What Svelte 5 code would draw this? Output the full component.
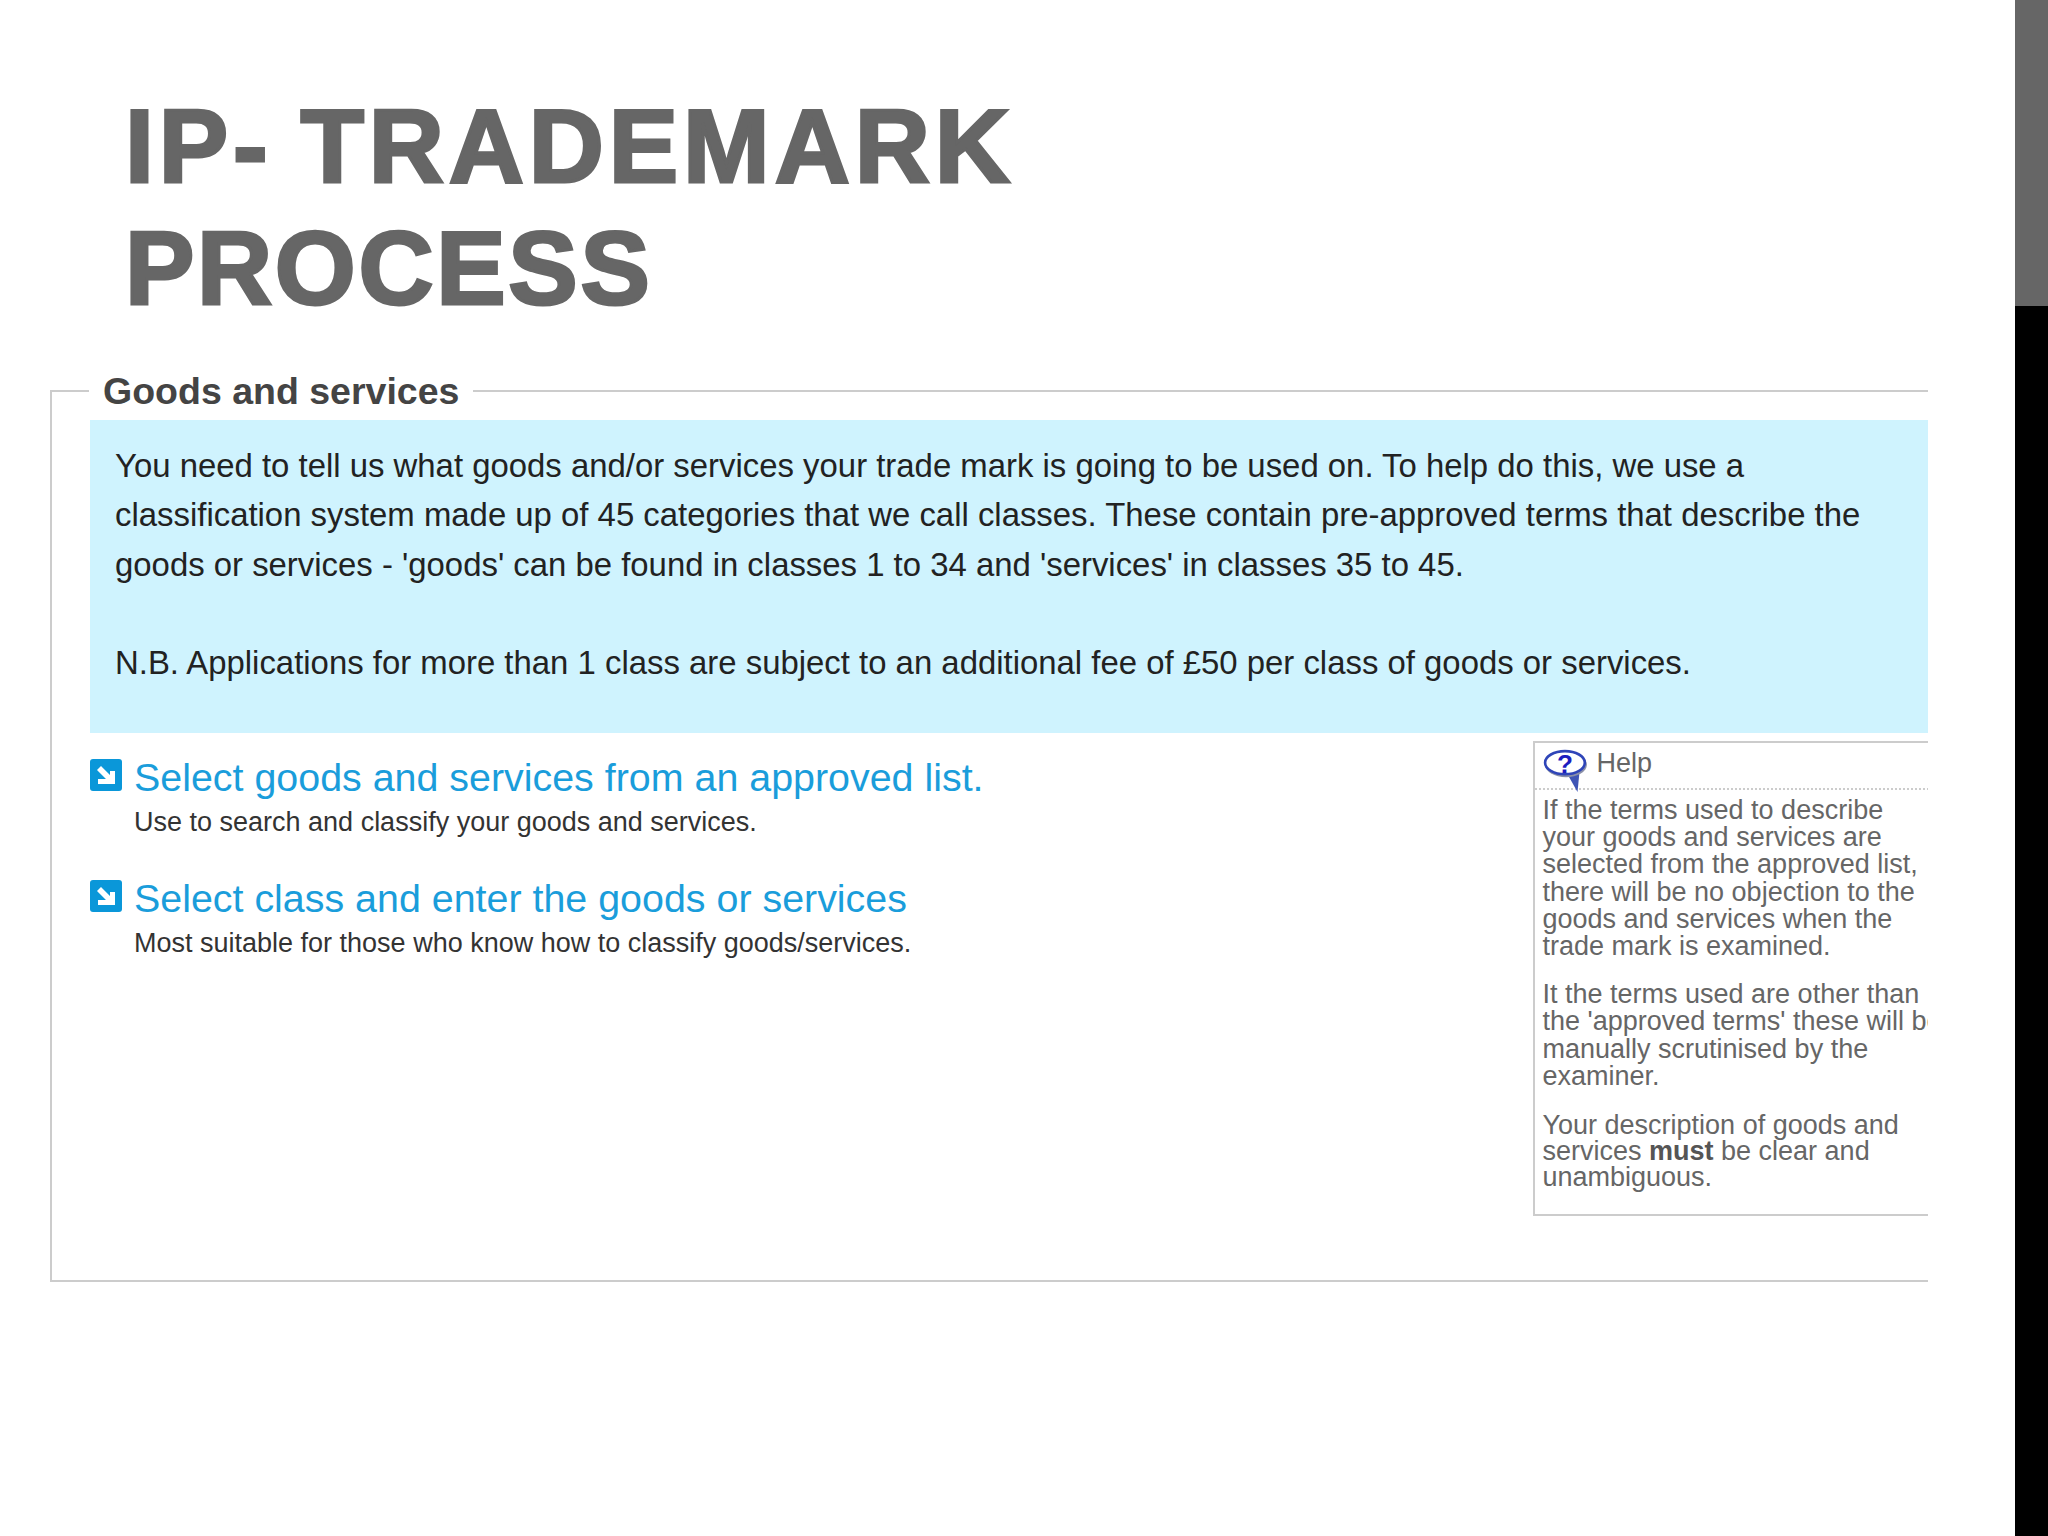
<script>
  // Slide content: body copy is split by line so the breaks stay as on the slide
  const intro = [
    'You need to tell us what goods and/or services your trade mark is going to be used on. To help do this, we use a',
    'classification system made up of 45 categories that we call classes. These contain pre-approved terms that describe the',
    "goods or services - 'goods' can be found in classes 1 to 34 and 'services' in classes 35 to 45."
  ];

  const options = [
    { title: 'Select goods and services from an approved list.', sub: 'Use to search and classify your goods and services.' },
    { title: 'Select class and enter the goods or services', sub: 'Most suitable for those who know how to classify goods/services.' }
  ];

  const helpTop = [
    'If the terms used to describe',
    'your goods and services are',
    'selected from the approved list,',
    'there will be no objection to the',
    'goods and services when the',
    'trade mark is examined.'
  ];

  const helpMiddle = [
    'It the terms used are other than',
    "the 'approved terms' these will be",
    'manually scrutinised by the',
    'examiner.'
  ];
</script>

<div class="slide">
  <main class="content">
    <h1><span class="first">IP- TRADEMARK</span><span class="second">PROCESS</span></h1>

    <fieldset class="panel">
      <legend>Goods and services</legend>

      <div class="intro">
        {#each intro as line}
          <p>{line}</p>
        {/each}
        <p class="note">N.B. Applications for more than 1 class are subject to an additional fee of £50 per class of goods or services.</p>
      </div>

      <div class="lower">
        <div class="options">
          {#each options as option}
            <div class="option">
              <svg class="arrow" viewBox="0 0 32 32" aria-hidden="true">
                <rect width="32" height="32" rx="3" fill="#0a97d9" />
                <path d="M7 11l4-4 9 9v-4h5v13H8v-5h8z" fill="#fff" />
              </svg>
              <div>
                <a href="#top">{option.title}</a>
                <p>{option.sub}</p>
              </div>
            </div>
          {/each}
        </div>

        <aside class="help">
          <div class="help-head">
            <svg class="bubble" viewBox="0 0 44 44" aria-hidden="true">
              <path d="M24 26l9 16 2-20z" fill="#3f55b5" />
              <ellipse cx="22" cy="16" rx="20" ry="12" fill="#8a90a8" />
              <ellipse cx="21" cy="14" rx="19" ry="11" fill="#fff" stroke="#2f45b8" stroke-width="2.5" />
              <text x="21" y="24" class="mark">?</text>
            </svg>
            <span>Help</span>
          </div>
          <div class="help-body">
            <p>{#each helpTop as line}{line}<br />{/each}</p>
            <p class="middle">{#each helpMiddle as line}{line}<br />{/each}</p>
            <p class="tight">Your description of goods and<br />services <b>must</b> be clear and<br />unambiguous.</p>
          </div>
        </aside>
      </div>
    </fieldset>
  </main>

  <div class="sidebar">
    <div class="sidebar-top"></div>
    <div class="sidebar-rest"></div>
  </div>
</div>

<style>
  :global(body) {
    margin: 0;
    background: #fff;
  }

  .slide {
    display: flex;
    width: 2048px;
    height: 1536px;
    overflow: hidden;
    font-family: "Liberation Sans", Arial, sans-serif;
  }

  .content {
    width: 2015px;
    padding-top: 85px;
    box-sizing: border-box;
  }

  /* Title */
  h1 {
    margin: 0 0 0 125px;
    font-size: 104px;
    line-height: 122px;
    font-weight: 700;
    color: #666;
    -webkit-text-stroke: 3px #666;
  }
  h1 span {
    display: block;
  }
  .first {
    letter-spacing: 4.9px;
    word-spacing: -6px;
  }
  .second {
    letter-spacing: 2.7px;
  }

  /* Outer frame, open on the right */
  .panel {
    width: 1878px;
    height: 910px;
    margin: 43px 0 0 50px;
    padding: 10px 0 0 38px;
    border: 2px solid #ccc;
    border-right: none;
    box-sizing: border-box;
    min-width: 0;
  }

  legend {
    margin-left: -1px;
    padding: 0 14px;
    font-size: 37.5px;
    line-height: 38px;
    font-weight: 700;
    color: #444;
  }

  /* Blue intro box */
  .intro {
    height: 313px;
    padding: 21px 0 0 25px;
    box-sizing: border-box;
    background: #cff3fe;
    font-size: 32.9px;
    line-height: 49.4px;
    color: #222;
    white-space: nowrap;
  }
  .intro p {
    margin: 0;
  }
  .intro .note {
    margin-top: 49px;
  }

  .lower {
    display: flex;
    justify-content: space-between;
    overflow: hidden;
    padding-top: 8px;
  }

  /* Links on the left */
  .options {
    display: flex;
    flex-direction: column;
    gap: 43px;
    padding-top: 18px;
  }
  .option {
    display: flex;
    gap: 12px;
  }
  .arrow {
    width: 32px;
    height: 32px;
    flex: none;
  }
  .option a {
    display: block;
    font-size: 39.4px;
    line-height: 36px;
    color: #1a9ddb;
    text-decoration: none;
  }
  .option p {
    margin: 12px 0 0;
    font-size: 27px;
    line-height: 30px;
    color: #333;
  }

  /* Help box, cut off by the frame */
  .help {
    width: 430px;
    height: 475px;
    margin-right: -34.5px;
    flex: none;
    border: 2px solid #ccc;
    box-sizing: border-box;
    color: #666;
    font-size: 27px;
    line-height: 27.2px;
    white-space: nowrap;
  }
  .help-head {
    display: flex;
    gap: 8px;
    height: 45px;
    padding-left: 8px;
    border-bottom: 2px dotted #ccc;
  }
  .help-head span {
    padding-top: 7px;
  }
  .bubble {
    width: 46px;
    height: 46px;
    margin-top: 5px;
    flex: none;
  }
  .mark {
    font-size: 25px;
    font-weight: 700;
    fill: #1c1cc0;
    text-anchor: middle;
  }
  .help-body {
    padding: 7px 0 0 8px;
  }
  .help-body p {
    margin: 0 0 21px;
  }
  .help-body .middle {
    margin-bottom: 22px;
  }
  .help-body .tight {
    line-height: 26px;
  }
  .help-body b {
    color: #555;
  }

  /* Dark strip on the right edge */
  .sidebar {
    display: flex;
    flex-direction: column;
    width: 33px;
  }
  .sidebar-top {
    height: 306px;
    background: #666;
  }
  .sidebar-rest {
    flex: 1;
    background: #000;
  }
</style>
